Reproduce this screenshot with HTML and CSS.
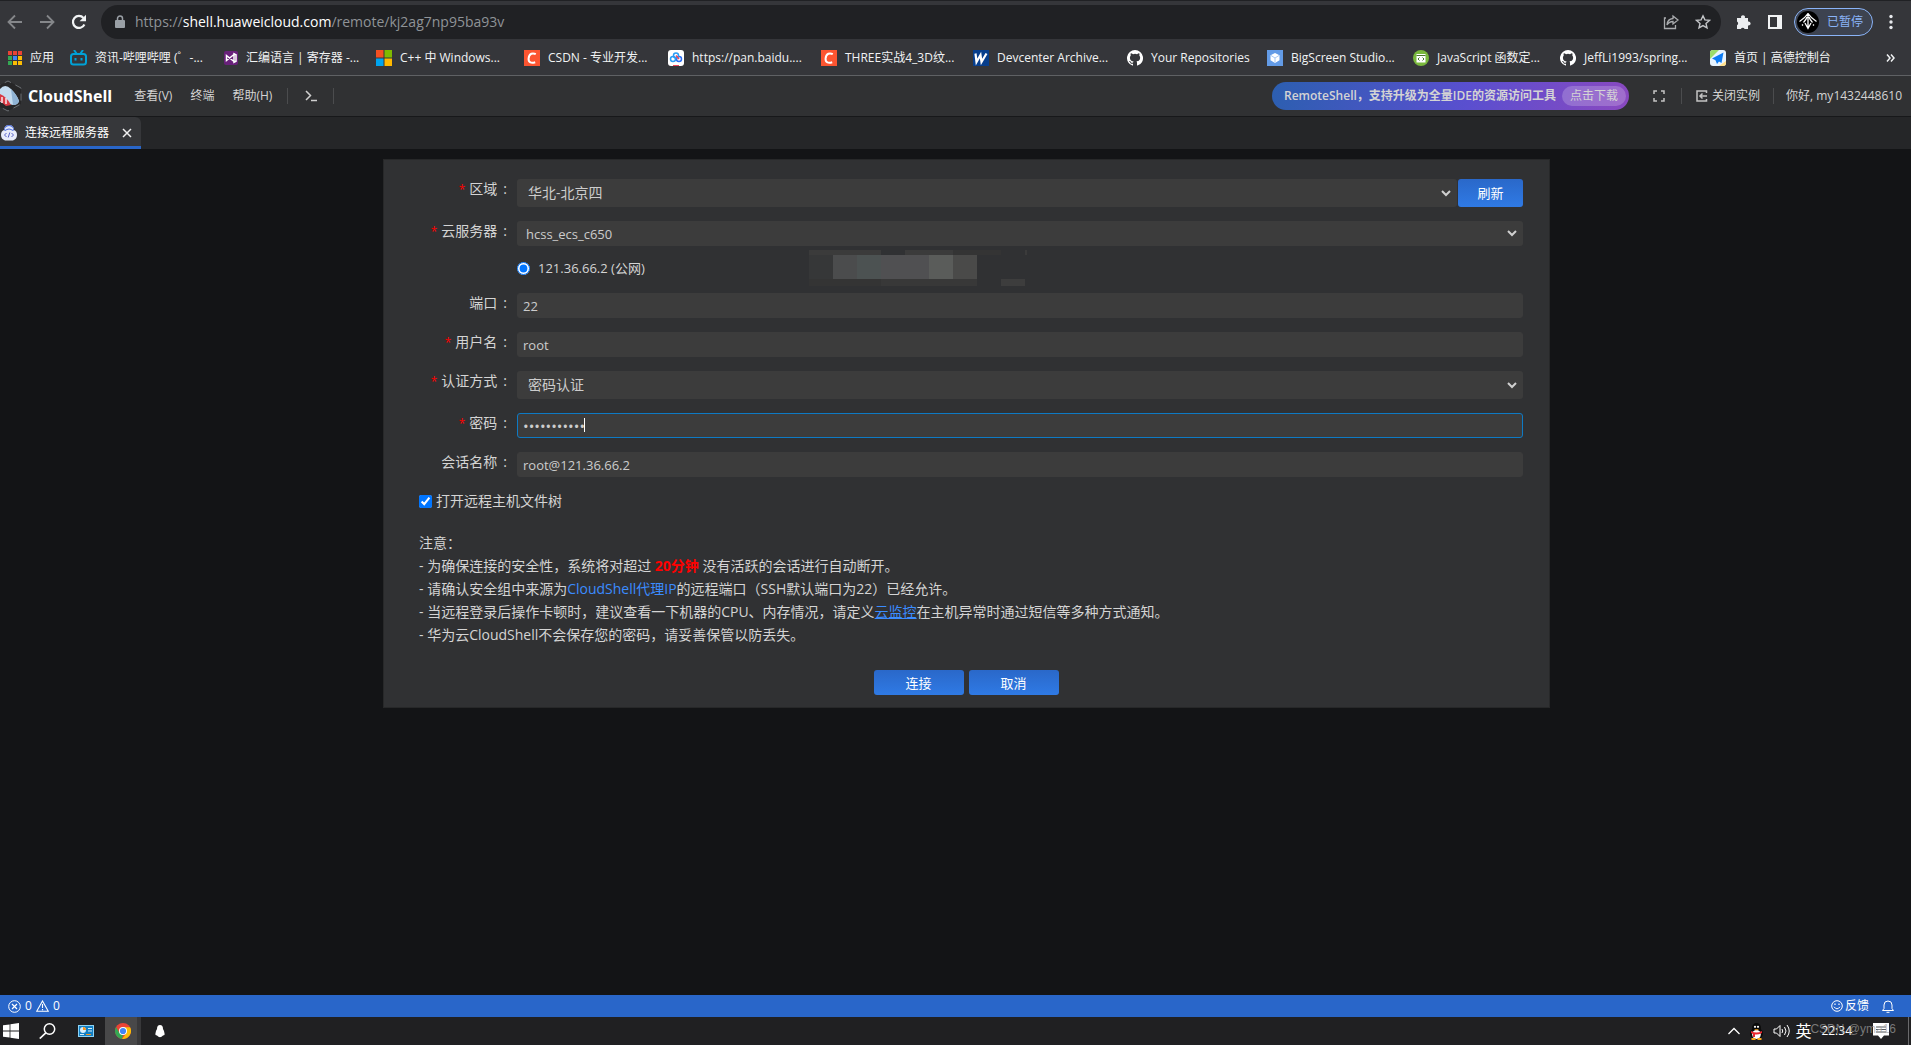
FILE: index.html
```html
<!DOCTYPE html>
<html lang="zh-CN">
<head>
<meta charset="utf-8">
<title>CloudShell</title>
<link rel="stylesheet" href="styles.css">
</head>
<body>
<svg class="defs" aria-hidden="true">
  <symbol id="github" viewBox="0 0 16 16"><path fill="#fff" d="M8 0a8 8 0 0 0-2.53 15.59c.4.07.55-.17.55-.38v-1.49c-2.01.37-2.53-.49-2.69-.94-.09-.23-.48-.94-.82-1.13-.28-.15-.68-.52-.01-.53.63-.01 1.08.58 1.23.82.72 1.21 1.87.87 2.33.66.07-.52.28-.87.51-1.07-1.78-.2-3.64-.89-3.64-3.95 0-.87.31-1.59.82-2.15-.08-.2-.36-1.02.08-2.12 0 0 .67-.21 2.2.82a7.6 7.6 0 0 1 4 0c1.53-1.04 2.2-.82 2.2-.82.44 1.1.16 1.92.08 2.12.51.56.82 1.27.82 2.15 0 3.07-1.87 3.75-3.65 3.95.29.25.54.73.54 1.48v2.2c0 .21.15.46.55.38A8 8 0 0 0 8 0z"/></symbol>
  <symbol id="csdn" viewBox="0 0 16 16"><path fill="#fc5531" d="M0 0h16v16H0z"/><path d="M11.8 4.2C9 2.7 5.200 3.200 4.600 8.400c-.4 4.500 3 5 6.600 3.800" fill="none" stroke="#fff" stroke-width="2"/></symbol>
</svg>

<header class="browser">
  <div class="toolbar">
    <button class="tool" aria-label="后退"><svg width="16" height="16" viewBox="0 0 16 16"><path d="M15 8H2M8 1.500 1.500 8 8 14.500" fill="none" stroke="#85878a" stroke-width="1.800"/></svg></button>
    <button class="tool" aria-label="前进"><svg width="16" height="16" viewBox="0 0 16 16"><path d="M1 8h13M8 1.500 14.500 8 8 14.500" fill="none" stroke="#85878a" stroke-width="1.800"/></svg></button>
    <button class="tool" aria-label="刷新"><svg width="16" height="16" viewBox="0 0 16 16"><path d="M13.400 10.500A6 6 0 1 1 12.500 4" fill="none" stroke="#f1f3f4" stroke-width="2.200"/><path d="M15 .8v6.400H8.600z" fill="#f1f3f4"/></svg></button>
    <div class="address">
      <svg width="10" height="14" viewBox="0 0 10 14"><path d="M1 5h8q1 0 1 1v6q0 1-1 1H1q-1 0-1-1V6q0-1 1-1z" fill="#9aa0a6"/><path d="M2.500 5V3.500a2.500 2.500 0 0 1 5 0V5" fill="none" stroke="#9aa0a6" stroke-width="1.500"/></svg>
      <span class="url">https://<b>shell.huaweicloud.com</b>/remote/kj2ag7np95ba93v</span>
      <svg width="16" height="16" viewBox="0 0 16 16"><path d="M3 4H1.500v10.500h11V11" fill="none" stroke="#a9abae" stroke-width="1.300"/><path d="M10 2l5 4-5 4V7.500C7 7.500 5.500 8.500 4 11c.2-4 2.500-6.200 6-6.500z" fill="none" stroke="#a9abae" stroke-width="1.300"/></svg>
      <svg width="16" height="16" viewBox="0 0 16 16"><path d="M8 1.800l1.900 4.100 4.500.5-3.400 3 1 4.500-4-2.300-4 2.300 1-4.500-3.400-3 4.500-.5z" fill="none" stroke="#c3c5c8" stroke-width="1.400"/></svg>
    </div>
    <svg width="16" height="16" viewBox="0 0 16 16"><path fill="#eceef0" d="M1 4h4.200a2 2 0 1 1 3.600 0H12v3.600a2 2 0 1 1 0 3.800V15H8.600a2 2 0 0 0-3.700 0H1v-3.800a2 2 0 0 0 0-3.600z"/></svg>
    <svg width="14" height="14" viewBox="0 0 14 14"><path d="M1 1h12v12H1z" fill="none" stroke="#f1f3f4" stroke-width="2"/><path d="M9 1h4v12H9z" fill="#f1f3f4"/></svg>
    <button class="profile">
      <svg width="22" height="22" viewBox="0 0 22 22"><circle cx="11" cy="11" r="11" fill="#000"/><path d="M11 2v15M11 2.500Q8 7 2.500 10.500M11 2.500q3 4.500 8.500 8M10 6Q9 9 6.500 11.500M12 6q1 3 3.500 5.500M8 12l3 5.500 3-5.500M5 13.500l1 1M17 13.500l-1 1" fill="none" stroke="#fff" stroke-width="1.300"/></svg>
      <span>已暂停</span>
    </button>
    <svg width="4" height="16" viewBox="0 0 4 16" fill="#e8eaed"><circle cx="2" cy="2.500" r="1.700"/><circle cx="2" cy="8" r="1.700"/><circle cx="2" cy="13.500" r="1.700"/></svg>
  </div>
  <nav class="bookmarks">
    <a href="#"><svg width="14" height="14" viewBox="0 0 14 14"><path fill="#ea4335" d="M0 0h4v4H0zM5 0h4v4H5zM10 0h4v4h-4z"/><path fill="#34a853" d="M0 5h4v4H0zM0 10h4v4H0z"/><path fill="#4285f4" d="M5 5h4v4H5z"/><path fill="#fbbc04" d="M10 5h4v4h-4zM5 10h4v4H5zM10 10h4v4h-4z"/></svg><span>应用</span></a>
    <a href="#"><svg width="17" height="16" viewBox="0 0 17 16"><rect x="1" y="4" width="15" height="10.500" rx="2.500" fill="none" stroke="#00a1d6" stroke-width="2"/><path d="M4 0l2.500 3.500M13 0l-2.500 3.500M5.500 8v2.500M11.500 8v2.500" stroke="#00a1d6" stroke-width="2"/></svg><span>资讯-哔哩哔哩 (゜-...</span></a>
    <a href="#"><svg width="14" height="14" viewBox="0 0 14 14"><rect width="14" height="14" rx="2" fill="#68217a"/><path d="M2.500 4.500 10 10.500v-7L2.500 9.500zM10 2.800l2 1v6.400l-2 1z" fill="none" stroke="#fff" stroke-width="1.500"/></svg><span>汇编语言 | 寄存器 -...</span></a>
    <a href="#"><svg width="16" height="16" viewBox="0 0 16 16"><path fill="#f25022" d="M0 0h7.500v7.500H0z"/><path fill="#7fba00" d="M8.500 0H16v7.500H8.500z"/><path fill="#00a4ef" d="M0 8.500h7.500V16H0z"/><path fill="#ffb900" d="M8.500 8.500H16V16H8.500z"/></svg><span>C++ 中 Windows...</span></a>
    <a href="#"><svg width="16" height="16"><use href="#csdn"/></svg><span>CSDN - 专业开发...</span></a>
    <a href="#"><svg width="16" height="16" viewBox="0 0 16 16"><rect width="16" height="16" rx="3" fill="#fff"/><circle cx="5" cy="9" r="2.500" fill="none" stroke="#2b9df4" stroke-width="1.500"/><circle cx="11" cy="9" r="2.500" fill="none" stroke="#2b6df4" stroke-width="1.500"/><circle cx="8" cy="5.500" r="2.500" fill="none" stroke="#2b9df4" stroke-width="1.500"/><path d="M8 5.500 11 9" stroke="#f0455a" stroke-width="1.500"/><path d="M5 15.500h6" stroke="#f0455a"/></svg><span>https://pan.baidu....</span></a>
    <a href="#"><svg width="16" height="16"><use href="#csdn"/></svg><span>THREE实战4_3D纹...</span></a>
    <a href="#"><svg width="16" height="16" viewBox="0 0 16 16"><path fill="#073e8c" d="M0 0h16v16H0z"/><path d="M2.500 3.500 3.500 12 7.500 5l1 7 5-8.500" fill="none" stroke="#fff" stroke-width="2.200"/></svg><span>Devcenter Archive...</span></a>
    <a href="#"><svg width="16" height="16"><use href="#github"/></svg><span>Your Repositories</span></a>
    <a href="#"><svg width="16" height="16" viewBox="0 0 16 16"><path fill="#639be6" d="M0 0h16v16H0z"/><path fill="#fff" d="M8 3l4.500 2.300v5L8 13l-4.500-2.700v-5z"/><path d="M4 5.500 8 8l4-2.500M8 8v4.500" fill="none" stroke="#a9c8f2"/></svg><span>BigScreen Studio...</span></a>
    <a href="#"><svg width="16" height="16" viewBox="0 0 16 16"><circle cx="8" cy="8" r="8" fill="#79b83c"/><path fill="#fff" d="M3.500 4h9v8.500h-9z"/><path d="M3.500 5.500h9" stroke="#48752a"/><path d="M6.500 7.500 5 9l1.500 1.500M9.500 7.500 11 9l-1.500 1.500" fill="none" stroke="#48752a"/></svg><span>JavaScript 函数定...</span></a>
    <a href="#"><svg width="16" height="16"><use href="#github"/></svg><span>JeffLi1993/spring...</span></a>
    <a href="#"><svg width="16" height="16" viewBox="0 0 16 16"><rect width="16" height="16" rx="3" fill="#e8f4ff"/><path fill="#9cdc6a" d="M3 0h6L0 9V3q0-3 3-3z"/><path fill="#ffe08a" d="M9 16h4q3 0 3-3v-2z"/><path fill="#0c7cf5" d="M13.500 2.500 2 8.500l3.500 1.700L7 14l2-2.500 2.500 1.500z"/></svg><span>首页 | 高德控制台</span></a>
    <button class="more" aria-label="更多书签"><svg width="9" height="8" viewBox="0 0 9 8"><path d="M1 .5 4 4 1 7.500M5 .5 8 4 5 7.500" fill="none" stroke="#f1f3f4" stroke-width="1.500"/></svg></button>
  </nav>
</header>

<div class="appbar">
  <svg class="logo" width="24" height="32" viewBox="0 0 24 32"><path d="M-6 8 8 1l13 7v16L8 31-6 24" fill="#262627" stroke="#6b6f73" stroke-dasharray="7 5"/><path d="M0 9q5-6 11 0 6 6 8 12-1 4-6 4L0 22z" fill="#c3dbef"/><path d="M11 9q6 6 8 12-1 4-6 4z" fill="#8fb3d4"/><path d="M0 14q7 3 11 11l-5 1-6-5z" fill="#d83a45"/><path d="M2 17v6M6 18v6" stroke="#f6e9ec" stroke-width="1.500"/></svg>
  <strong class="brand">CloudShell</strong>
  <nav class="menu"><button>查看(V)</button><button>终端</button><button>帮助(H)</button></nav>
  <i class="sep"></i>
  <button class="prompt" aria-label="新终端"><svg width="12" height="12" viewBox="0 0 12 12"><path d="M1 1l4.500 4.500L1 10M6 10.500h6" fill="none" stroke="#d0d0d0" stroke-width="1.500"/></svg></button>
  <i class="sep"></i>
  <div class="promo"><span>RemoteShell，支持升级为全量IDE的资源访问工具</span><button>点击下载</button></div>
  <button class="full" aria-label="全屏"><svg width="12" height="12" viewBox="0 0 12 12"><path d="M1 4V1h3M8 1h3v3M11 8v3H8M4 11H1V8" fill="none" stroke="#c4c4c4" stroke-width="1.500"/></svg></button>
  <i class="sep"></i>
  <button class="close-instance"><svg width="12" height="12" viewBox="0 0 12 12"><path d="M10.500 3V1H1v10h9.500V9" fill="none" stroke="#c4c4c4" stroke-width="1.500"/><path d="M11 6H4M6.500 3.500 4 6l2.500 2.500" fill="none" stroke="#c4c4c4" stroke-width="1.500"/></svg>关闭实例</button>
  <i class="sep"></i>
  <span class="user">你好, my1432448610</span>
</div>

<div class="tabs">
  <div class="tab">
    <svg width="16" height="16" viewBox="0 0 16 16"><path d="M8 0q4.500 0 5 5 3 1 3 5t-4 5.500H4Q0 14 0 10t3-5q.5-5 5-5z" fill="#e9edfb"/><path d="M3 5q.5-5 5-5t5 5l-1 1Q8 3 4 6z" fill="#4d6edb"/><path d="M4 3q4-4 8 0v2Q8 2 4 5z" fill="#dfe6fa"/><path d="M5.500 8 3.500 10l2 2M10.500 8l2 2-2 2M8.800 7.500l-1.600 5" fill="none" stroke="#5a63c8"/></svg>
    <span>连接远程服务器</span>
    <button aria-label="关闭标签"><svg width="10" height="10" viewBox="0 0 10 10"><path d="M1 1l8 8M9 1 1 9" stroke="#f0f0f0" stroke-width="1.500"/></svg></button>
  </div>
</div>

<main class="workspace">
  <form class="panel">
    <div class="row">
      <label for="region"><em>*</em>区域</label>
      <div class="select tall"><select id="region"><option>华北-北京四</option></select><svg width="10" height="7" viewBox="0 0 10 7"><path d="M1 1l4 4 4-4" fill="none" stroke="#d0d0d0" stroke-width="2"/></svg></div>
      <button type="button" class="primary refresh">刷新</button>
    </div>
    <div class="row">
      <label for="server"><em>*</em>云服务器</label>
      <div class="select"><select id="server"><option>hcss_ecs_c650</option></select><svg width="10" height="7" viewBox="0 0 10 7"><path d="M1 1l4 4 4-4" fill="none" stroke="#d0d0d0" stroke-width="2"/></svg></div>
    </div>
    <div class="row host">
      <input type="radio" id="ip" name="ip" checked>
      <label for="ip">121.36.66.2 (公网)</label>
      <svg class="masked" width="220" height="36" viewBox="0 0 220 36"><path fill="#3b3b3b" d="M1 0h72v5H1zM97 0h48v5H97zM217 0h2v5h-2z"/><path fill="#343434" d="M145 0h48v5h-48zM1 29h72v7H1z"/><path fill="#363738" d="M1 5h24v24H1z"/><path fill="#4b4c4d" d="M25 5h24v24H25z"/><path fill="#4c5252" d="M49 5h24v24H49z"/><path fill="#505052" d="M73 5h48v24H73z"/><path fill="#5a5c5a" d="M121 5h24v24h-24z"/><path fill="#4a4a49" d="M145 5h24v24h-24z"/><path fill="#383838" d="M73 29h96v7H73z"/><path fill="#3d3d3d" d="M193 29h24v7h-24z"/></svg>
    </div>
    <div class="row">
      <label for="port">端口</label>
      <input class="text" id="port" type="text" value="22">
    </div>
    <div class="row">
      <label for="user"><em>*</em>用户名</label>
      <input class="text" id="user" type="text" value="root">
    </div>
    <div class="row">
      <label for="auth"><em>*</em>认证方式</label>
      <div class="select tall"><select id="auth"><option>密码认证</option></select><svg width="10" height="7" viewBox="0 0 10 7"><path d="M1 1l4 4 4-4" fill="none" stroke="#d0d0d0" stroke-width="2"/></svg></div>
    </div>
    <div class="row">
      <label for="password"><em>*</em>密码</label>
      <div class="secret"><input class="text active" id="password" type="password" value="cloudshell1"><i class="caret"></i></div>
    </div>
    <div class="row">
      <label for="session">会话名称</label>
      <input class="text" id="session" type="text" value="root@121.36.66.2">
    </div>
    <div class="tree"><input type="checkbox" id="tree" checked><label for="tree">打开远程主机文件树</label></div>
    <div class="notes">
      <p>注意：</p>
      <p>- 为确保连接的安全性，系统将对超过 <strong>20分钟</strong> 没有活跃的会话进行自动断开。</p>
      <p>- 请确认安全组中来源为<a href="#">CloudShell代理IP</a>的远程端口（SSH默认端口为22）已经允许。</p>
      <p>- 当远程登录后操作卡顿时，建议查看一下机器的CPU、内存情况，请定义<a href="#" class="under">云监控</a>在主机异常时通过短信等多种方式通知。</p>
      <p>- 华为云CloudShell不会保存您的密码，请妥善保管以防丢失。</p>
    </div>
    <div class="actions"><button type="button" class="primary">连接</button><button type="button" class="primary">取消</button></div>
  </form>
</main>

<footer>
  <div class="status">
    <svg width="13" height="13" viewBox="0 0 13 13"><circle cx="6.500" cy="6.500" r="5.800" fill="none" stroke="#fff"/><path d="M4 4l5 5M9 4 4 9" stroke="#fff" stroke-width="1.200"/></svg><span>0</span>
    <svg width="13" height="12" viewBox="0 0 13 12"><path d="M6.500 1 12.300 11.300H.7zM6.500 4v4M6.500 9v1.200" fill="none" stroke="#fff" stroke-width="1.100"/></svg><span>0</span>
    <button class="feedback"><svg width="12" height="12" viewBox="0 0 12 12"><circle cx="6" cy="6" r="5.300" fill="none" stroke="#fff"/><path d="M3 6.800q3 4 6 0" fill="none" stroke="#fff"/><path d="M4 3.500v1.500M8 3.500v1.500" stroke="#fff" stroke-width="1.200"/></svg>反馈</button>
    <button class="bell" aria-label="通知"><svg width="12" height="13" viewBox="0 0 12 13"><path d="M.5 10.500h11L10 8.500V5a4 4 0 0 0-8 0v3.500zM4.500 12.300h3" fill="none" stroke="#fff"/></svg></button>
  </div>
  <div class="taskbar">
    <svg class="t-win" width="16" height="16" viewBox="0 0 16 16" fill="#fff"><path d="M0 2.300 6.600 1.400v6.200H0zM7.400 1.300 16 0v7.600H7.400zM0 8.400h6.600v6.200L0 13.700zM7.400 8.400H16V16l-8.600-1.300z"/></svg>
    <svg class="t-search" width="17" height="16" viewBox="0 0 17 16"><circle cx="10.500" cy="6" r="5.200" fill="none" stroke="#fff" stroke-width="1.500"/><path d="M6.800 9.800.8 15.500" stroke="#fff" stroke-width="1.700"/></svg>
    <svg class="t-panel" width="16" height="12" viewBox="0 0 16 12"><path fill="#8ed3f5" d="M0 0h16v12H0z"/><path fill="#137fc4" d="M1 1h14v10H1z"/><circle cx="5" cy="5" r="3" fill="#d8eefa"/><path d="M5 5V2a3 3 0 0 1 3 3z" fill="#f7941d"/><path d="M10 3.500h4M10 6h4M2 9.500h4" stroke="#d8eefa"/><path d="M8 9.500h5" stroke="#f7941d"/></svg>
    <span class="t-active"><svg width="16" height="16" viewBox="0 0 16 16"><circle cx="8" cy="8" r="8" fill="#ea4335"/><path fill="#34a853" d="M1.070 4 4.500 10 8 12l-1 3.940A8 8 0 0 1 1.070 4z"/><path fill="#fbbc05" d="M8 4.200h7.050A8 8 0 0 1 7 15.940l4.500-5.900z"/><circle cx="8" cy="8" r="4" fill="#fff"/><circle cx="8" cy="8" r="3.100" fill="#4285f4"/></svg></span>
    <svg class="t-bird" width="10" height="13" viewBox="0 0 10 13"><path fill="#fff" d="M5 0q3 0 3 4 2 3 1.500 6l-1.500.5q-3 3.500-6 0L.5 10Q0 7 2 4q0-4 3-4z"/></svg>
    <div class="tray">
      <svg width="12" height="8" viewBox="0 0 12 8"><path d="M.5 7 6 1.500 11.500 7" fill="none" stroke="#fff" stroke-width="1.300"/></svg>
      <svg width="15" height="17" viewBox="0 0 15 17"><ellipse cx="7.500" cy="10.500" rx="6.500" ry="5.500" fill="#0a0a0a"/><ellipse cx="7.500" cy="5" rx="4.500" ry="5" fill="#0a0a0a"/><ellipse cx="7.500" cy="11.500" rx="4.300" ry="4.500" fill="#fff"/><path d="M2 8q5.500 3 11 0v2Q9 12 6 11.500V14H4v-3L2 10z" fill="#e8262d"/><circle cx="6" cy="3.800" r="1.100" fill="#fff"/><circle cx="9" cy="3.800" r="1.100" fill="#fff"/><path d="M5 6.200h5L7.500 7.500zM2.500 15h4v2h-4zM8.500 15h4v2h-4z" fill="#f9a61c"/></svg>
      <svg width="17" height="14" viewBox="0 0 17 14"><path d="M1 5h2.500L7 1.500v11L3.500 9H1z" fill="none" stroke="#fff"/><path d="M9 5q1.500 2 0 4M11.500 3q3 4 0 8M14 1q4.500 6 0 12" fill="none" stroke="#fff"/></svg>
      <span class="ime">英</span>
      <time>22:34</time>
      <svg width="16" height="16" viewBox="0 0 16 16"><path fill="#fff" d="M0 0h16v12.500h-5L8 16l-3-3.500H0z"/><path d="M3 4h10M3 6.500h10M3 9h10" stroke="#55585c"/></svg>
      <i class="edge"></i>
      <span class="watermark">CSDN @yma16</span>
    </div>
  </div>
</footer>
</body>
</html>
```
FILE: styles.css
```css
* { box-sizing: border-box; }

body {
  margin: 0;
  min-height: 100vh;
  display: flex;
  flex-direction: column;
  background: #131416;
  color: #d4d4d4;
  font: 12px/16px "Open Sans", "Noto Sans CJK SC", sans-serif;
}

button {
  display: inline-flex;
  align-items: center;
  justify-content: center;
  padding: 0;
  border: 0;
  background: none;
  color: inherit;
  font: inherit;
}

a { color: inherit; text-decoration: none; }
svg { flex: none; display: block; }
span, button, strong { white-space: nowrap; }
.defs { position: absolute; width: 0; height: 0; }

/* Browser chrome */
.browser {
  background: #35363a;
  border-top: 1px solid #202124;
  border-bottom: 1px solid #5f6164;
}

.toolbar {
  display: flex;
  align-items: center;
  height: 42px;
  padding: 0 18px 0 7px;
}
.tool { width: 16px; margin-right: 16px; }

.address {
  flex: 1;
  display: flex;
  align-items: center;
  height: 34px;
  margin: 0 15px 0 -2px;
  padding: 0 10px 0 14px;
  border-radius: 17px;
  background: #202124;
  gap: 16px;
}
.url {
  flex: 1;
  margin-left: -6px;
  color: #8f9397;
  font-size: 14px;
  line-height: 20px;
}
.url b { color: #fff; font-weight: 400; }

.profile {
  gap: 8px;
  height: 28px;
  margin: 0 16px 0 12px;
  padding: 0 9px 0 2px;
  border: 1px solid #8ab4f8;
  border-radius: 14px;
  background: #3d4350;
  color: #8ab4f8;
}
.address + svg { margin-right: 16px; }

.bookmarks {
  display: grid;
  grid-template-columns: 62px 154px 152px 148px 144px 153px 152px 154px 140px 146px 147px 150px 1fr auto;
  align-items: center;
  height: 32px;
  padding: 0 16px 2px 8px;
  color: #f1f3f4;
}
.bookmarks a { display: flex; align-items: center; gap: 8px; }

/* Application bar */
.appbar {
  display: flex;
  align-items: center;
  height: 41px;
  padding-right: 9px;
  background: #303133;
  border-bottom: 1px solid #17181a;
}
.brand { margin: 0 22px 0 4px; color: #fff; font-size: 16px; line-height: 20px; }
.menu { display: flex; gap: 18px; margin-right: 15px; }
.sep { flex: none; width: 1px; height: 16px; background: #4b4c4e; }
.prompt { margin: 0 16px 0 17px; }

.promo {
  display: flex;
  align-items: center;
  height: 28px;
  margin-left: auto;
  padding: 0 3px 0 12px;
  gap: 6px;
  border-radius: 14px;
  background: linear-gradient(100deg, #2c5fb0, #5a4fcf 55%, #8a49c0);
  font-weight: 600;
}
.promo button {
  height: 20px;
  padding: 0 8px;
  border-radius: 10px;
  background: rgba(255, 255, 255, .2);
  font-weight: 400;
}
.full { margin: 0 16px 0 24px; }
.close-instance { gap: 4px; margin: 0 13px 0 14px; }
.user { margin-left: 12px; }

.tabs { height: 32px; background: #252628; }
.tab {
  display: inline-flex;
  align-items: center;
  gap: 8px;
  height: 32px;
  padding: 2px 9px 0 1px;
  border-bottom: 3px solid #2966c9;
  border-radius: 0 6px 0 0;
  background: #36373a;
  color: #fff;
}
.tab button { margin-left: 5px; }

/* Connection form */
.workspace { flex: 1; padding: 10px 361px 10px 383px; }
.panel {
  padding: 19px 26px 12px 35px;
  border: 1px solid #272829;
  background: #303133;
  font-size: 14px;
  line-height: 20px;
}
.row { display: flex; margin-bottom: 14px; }
.row > label:first-child { width: 98px; padding-right: 10px; text-align: right; }
.row > label:first-child::after { content: ":"; margin-left: 6px; }
label em { margin-right: 4px; color: #f00; font-style: normal; font-size: 12px; }

.text {
  flex: 1;
  width: 100%;
  height: 25px;
  padding: 0 5px;
  border: 1px solid #3c3c3c;
  border-radius: 3px;
  outline: 0;
  background: #3c3c3c;
  color: #ccc;
  font: inherit;
  font-size: 13px;
}
.active { border-color: #0e7ac4; font-size: 15px; }

.select {
  flex: 1;
  display: grid;
  align-items: center;
  height: 25px;
}
.select select {
  grid-area: 1 / 1;
  height: 100%;
  padding: 0 9px;
  border: 0;
  border-radius: 3px;
  appearance: none;
  background: #3c3c3c;
  color: #ccc;
  font: inherit;
  font-size: 13px;
}
.select svg { grid-area: 1 / 1; justify-self: end; margin-right: 6px; pointer-events: none; }
.tall { height: 28px; }
.tall select { padding: 0 11px; font-size: 14px; }

.primary {
  width: 90px;
  height: 25px;
  border-radius: 3px;
  background: linear-gradient(#2a68c9, #2f7ae5);
  color: #fff;
  font-size: 13px;
}
.refresh { width: 65px; height: 28px; margin-left: 1px; }

.host { align-items: center; height: 36px; margin: -10px 0 7px 98px; }
.host input { width: 13px; height: 13px; margin: 0 8px 0 0; }
.host > label { flex: 0 0 270px; font-size: 13px; }

input[type="radio"], input[type="checkbox"] { accent-color: #0075ff; }

.secret { flex: 1; display: flex; position: relative; }
.caret { position: absolute; left: 67px; top: 5px; width: 1px; height: 14px; background: #fff; }

.tree { display: flex; align-items: center; margin: 14px 0 20px; }
.tree input { width: 13px; height: 13px; margin: 0 4px 0 0; }

.notes p { margin: 0; line-height: 23px; }
.notes strong { color: #f00; }
.notes a { color: #3b8cff; }
.notes .under { text-decoration: underline; }

.actions { display: flex; justify-content: center; gap: 5px; margin-top: 24px; padding-right: 10px; }

/* Status bar and taskbar */
.status {
  display: flex;
  align-items: center;
  height: 22px;
  padding: 0 17px 0 8px;
  gap: 4px;
  background: #2966c9;
  color: #fff;
}
.feedback { gap: 2px; margin-left: auto; }
.bell { margin-left: 9px; }

.taskbar {
  display: flex;
  align-items: center;
  height: 28px;
  padding-left: 3px;
  background: #202022;
  color: #fff;
}
.t-search { margin-left: 20px; }
.t-panel { margin-left: 22px; }
.t-active {
  display: flex;
  align-items: center;
  justify-content: center;
  width: 36px;
  height: 28px;
  margin: 0 14px 0 11px;
  border-right: 4px solid #38383a;
  background: #484849;
}
.t-active svg { margin-left: 4px; }
.tray { position: relative; display: flex; align-items: center; gap: 9px; height: 28px; margin-left: auto; }
.ime { margin-left: -4px; font-size: 16px; }
time { margin: 0 12px 0 1px; }
.edge { width: 1px; height: 28px; margin: 0 2px 0 10px; background: #6a6a6c; }
.watermark { position: absolute; right: 15px; top: 4px; color: rgba(160, 160, 160, .7); font-family: "Liberation Sans", sans-serif; }
```
